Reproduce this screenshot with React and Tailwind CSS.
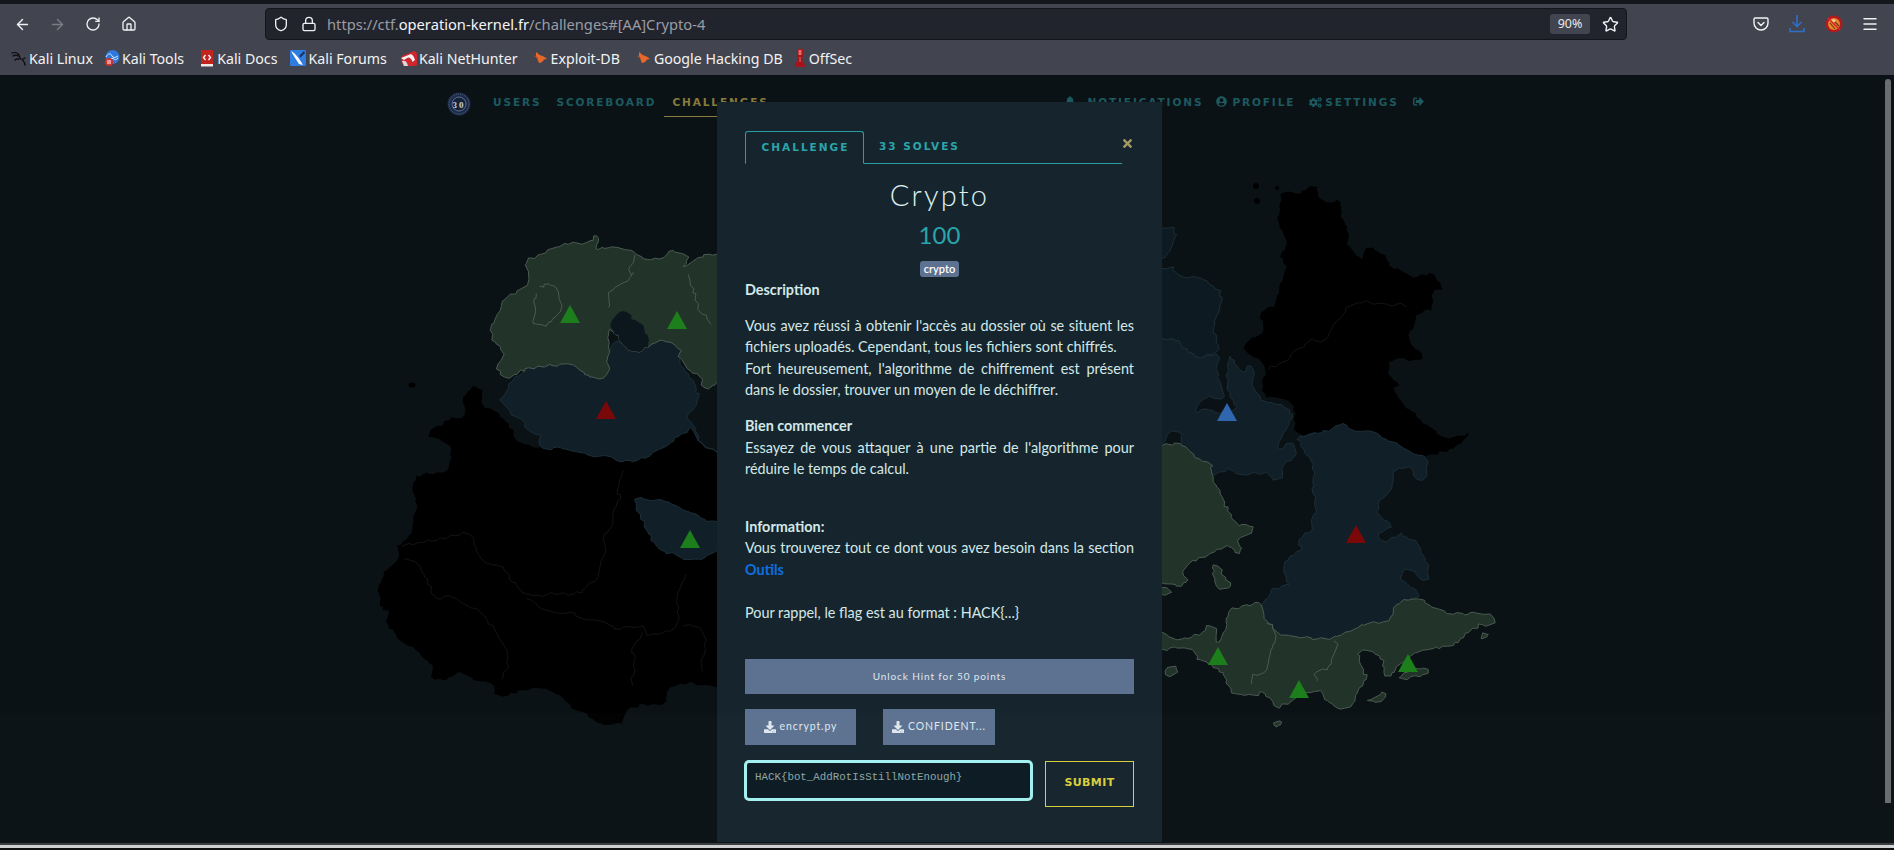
import React from "react";
import { ArrowLeft, ArrowRight, RotateCw, Home, Shield, Lock, Star, Menu } from "lucide-react";
import { FaBell, FaUserCircle, FaCogs, FaSignOutAlt, FaTimes, FaDownload } from "react-icons/fa";

// organic outline: corner cutting plus a position-based wobble, so shared borders stay shared
function organic(pts, closed = true) {
  const q = [];
  const m = pts.length;
  for (let i = 0; i < (closed ? m : m - 1); i++) {
    const [x0, y0] = pts[i];
    const [x1, y1] = pts[(i + 1) % m];
    q.push([x0 * 0.8 + x1 * 0.2, y0 * 0.8 + y1 * 0.2]);
    q.push([x0 * 0.2 + x1 * 0.8, y0 * 0.2 + y1 * 0.8]);
  }
  const out = [];
  const n = q.length;
  for (let i = 0; i < (closed ? n : n - 1); i++) {
    const [x0, y0] = q[i];
    const [x1, y1] = q[(i + 1) % n];
    const len = Math.hypot(x1 - x0, y1 - y0);
    const steps = Math.max(1, Math.round(len / 4));
    for (let s = 0; s < steps; s++) {
      const x = x0 + ((x1 - x0) * s) / steps;
      const y = y0 + ((y1 - y0) * s) / steps;
      const dx = Math.sin(x * 0.83 + y * 0.47) * 1.2 + Math.sin(x * 0.21 - y * 0.17) * 1.3;
      const dy = Math.cos(x * 0.41 - y * 0.79) * 1.2 + Math.cos(x * 0.13 + y * 0.23) * 1.3;
      out.push(`${(x + dx).toFixed(1)},${(y + dy).toFixed(1)}`);
    }
  }
  return out.join(" ");
}
const toA = (s) => s.map(([x, y]) => [380 + x / 3, 125 + y / 2.412]);
const toB = (s) => s.map(([x, y]) => [1150 + x / 3, 95 + y / 2.613]);
const a = (s) => organic(toA(s));
const b = (s) => organic(toB(s));
const al = (s) => organic(toA(s), false);
const bl = (s) => organic(toB(s), false);

const GREEN = "#22332a";
const GSTROKE = "#4a5b51";
const BLUE = "#111f28";
const BSTROKE = "#1d2e36";

const blackW = [[280,440],[310,470],[300,490],[370,520],[410,580],[480,600],[530,595],[600,610],[700,625],[780,630],[850,600],[900,570],[930,545],[960,590],[1040,620],[1040,780],[970,770],[880,730],[770,715],[770,750],[830,850],[970,870],[1040,825],[1040,1180],[950,1165],[870,1175],[855,1220],[760,1220],[740,1240],[720,1270],[640,1260],[560,1210],[500,1175],[400,1190],[350,1195],[340,1170],[240,1140],[200,1160],[150,1155],[160,1125],[100,1085],[30,1040],[15,1010],[25,990],[0,995],[0,905],[60,860],[50,840],[75,825],[110,760],[100,690],[110,665],[190,660],[215,630],[215,590],[150,570],[160,550],[210,525],[250,520],[255,480]];
const greenNW = [[435,150],[520,115],[570,100],[620,105],[650,85],[660,100],[640,120],[700,110],[760,125],[830,150],[870,125],[920,130],[925,150],[915,160],[950,135],[1040,130],[1040,430],[970,455],[960,430],[890,380],[900,355],[860,340],[810,350],[770,375],[720,340],[690,300],[680,340],[690,350],[680,430],[640,435],[600,410],[530,392],[430,410],[380,435],[350,400],[370,370],[325,325],[350,290],[345,270],[390,230],[440,210],[445,185]];
const pit = [[690,295],[720,270],[750,270],[770,295],[800,310],[810,350],[770,375],[720,340]];
const blueC = [[360,470],[430,410],[530,392],[600,410],[640,435],[680,430],[690,350],[720,340],[770,375],[810,350],[860,340],[900,355],[890,380],[960,460],[950,500],[920,520],[945,540],[960,590],[1040,620],[1040,440],[1040,620],[960,590],[930,545],[900,570],[850,600],[780,630],[700,625],[600,610],[530,595],[480,600],[475,565],[440,550],[420,530],[380,500],[365,490]];
const blueSm = [[770,715],[880,730],[970,770],[1040,780],[1040,825],[970,870],[830,850],[770,750]];
const greenE = [[0,730],[90,710],[130,745],[185,765],[190,800],[215,860],[250,925],[310,930],[315,945],[265,965],[280,990],[260,1000],[240,980],[170,1010],[120,1030],[90,1050],[115,1070],[90,1085],[0,1075]];
const ne1 = [[0,270],[65,250],[80,275],[150,280],[225,325],[190,400],[205,470],[170,490],[100,475],[80,440],[0,440]];
const ne2 = [[0,170],[65,145],[80,170],[75,200],[0,260]];
const blueN = [[0,440],[80,440],[100,475],[170,490],[205,480],[205,560],[225,595],[190,590],[150,600],[135,630],[170,620],[200,640],[260,625],[240,600],[230,500],[240,480],[265,520],[290,530],[300,510],[318,525],[300,560],[340,610],[410,615],[435,655],[390,690],[390,740],[420,700],[440,750],[395,770],[395,810],[370,810],[365,790],[280,800],[240,775],[190,800],[185,765],[130,745],[90,710],[100,685],[50,685],[40,720],[0,730]];
const blackNE = [[390,60],[410,55],[445,60],[500,35],[510,80],[570,80],[570,115],[600,160],[590,200],[640,235],[655,200],[700,220],[720,260],[750,250],[780,285],[850,265],[875,310],[850,320],[850,360],[800,370],[800,410],[770,425],[790,460],[825,490],[790,500],[720,495],[710,540],[750,560],[725,575],[790,640],[880,700],[920,700],[960,690],[930,720],[830,755],[750,720],[640,680],[560,665],[545,685],[440,690],[430,620],[410,600],[340,590],[340,530],[345,510],[275,470],[300,445],[340,430],[335,370],[385,345],[390,290],[415,260],[390,220],[410,180],[385,130]];
const blueSE = [[445,695],[545,685],[560,665],[640,680],[750,720],[830,755],[830,805],[810,815],[780,780],[735,780],[725,830],[680,870],[680,905],[725,925],[685,960],[700,975],[760,945],[820,990],[835,1060],[820,1075],[790,1045],[750,1045],[750,1075],[800,1100],[800,1120],[730,1135],[725,1180],[640,1190],[560,1220],[450,1225],[380,1210],[345,1170],[340,1135],[365,1095],[415,1085],[400,1060],[420,1010],[460,990],[445,960],[495,935],[490,770],[450,720]];
const greenS = [[0,1205],[90,1225],[150,1215],[175,1185],[205,1210],[195,1235],[225,1215],[230,1150],[285,1135],[340,1135],[345,1170],[380,1210],[450,1225],[560,1220],[640,1190],[725,1180],[730,1135],[800,1120],[880,1160],[960,1155],[1030,1165],[1030,1185],[980,1190],[910,1240],[830,1255],[770,1275],[725,1320],[700,1325],[695,1270],[640,1255],[625,1270],[650,1335],[600,1405],[530,1400],[515,1360],[470,1365],[430,1385],[385,1410],[345,1360],[300,1380],[235,1355],[220,1300],[150,1290],[125,1250],[0,1250]];
const islands = [
  [[745,1325],[790,1295],[835,1305],[830,1320],[760,1330]],
  [[185,1030],[205,1030],[215,1065],[240,1080],[235,1095],[205,1090],[190,1065]],
  [[990,1210],[1015,1207],[1015,1222],[990,1222]],
  [[52,1295],[75,1295],[80,1315],[60,1322],[50,1310]],
  [[368,1437],[388,1437],[390,1452],[375,1457]],
  [[658,1385],[695,1365],[708,1375],[695,1390],[662,1393]],
  [[0,1090],[55,1092],[60,1105],[0,1112]],
];
const linesGreenA = [[[465,210],[520,197],[548,240],[530,285],[490,310],[450,295],[470,250],[465,210]], [[760,125],[750,180],[770,180],[715,210],[680,230],[690,280]], [[920,165],[950,260],[1010,315]]];
const linesGreenB = [[[345,1170],[380,1210],[360,1270],[345,1310],[305,1320],[305,1360]], [[545,1220],[560,1250],[545,1295],[495,1310],[515,1360]], [[195,1235],[225,1215]]];
const linesDarkA = [[[50,840],[170,815],[270,805],[300,870],[370,890],[430,955],[600,950],[660,900],[680,800],[720,725],[710,700],[740,630]], [[430,955],[490,990],[620,1005],[690,1030],[790,1030],[800,1050],[900,1030],[885,960],[930,880]], [[60,860],[130,885],[160,960],[230,960],[320,1005],[375,1080],[385,1135],[350,1180]], [[790,1040],[760,1070],[760,1160],[750,1190]], [[900,1030],[970,1030],[975,1100],[950,1165]]];
const linesDarkB = [[[345,520],[400,500],[480,440],[520,450],[580,370],[630,345],[740,350],[800,370]]];

const tris = [
  [570, 239, "#1c7f1c"], [677, 245, "#1c7f1c"], [606, 335, "#7a0808"], [690, 464, "#1c7f1c"],
  [1227, 337, "#2f66ad"], [1356, 459, "#7a0808"], [1218, 581, "#1c7f1c"], [1299, 614, "#1c7f1c"], [1408, 588, "#1c7f1c"],
];

function MapArt() {
  return (
    <svg className="absolute inset-0" width="1894" height="768" viewBox="0 0 1894 768">
      <polygon points={a(blackW)} fill="#000" />
      <ellipse cx="412" cy="310" rx="3.500" ry="2.500" fill="#000" />
      {linesDarkA.map((l, i) => <polyline key={i} points={al(l)} fill="none" stroke="#111517" strokeWidth="1" />)}
      <polygon points={a(blueC)} fill={BLUE} stroke={BSTROKE} strokeWidth="1" strokeLinejoin="round" />
      <polygon points={a(blueSm)} fill={BLUE} stroke={BSTROKE} strokeWidth="1" />
      <polygon points={a(greenNW)} fill={GREEN} stroke={GSTROKE} strokeWidth="1" strokeLinejoin="round" />
      <polygon points={a(pit)} fill="#0c161d" />
      {linesGreenA.map((l, i) => <polyline key={i} points={al(l)} fill="none" stroke={GSTROKE} strokeWidth="1" />)}

      <polygon points={b(ne2)} fill="#0e1a21" stroke={BSTROKE} strokeWidth="1" />
      <polygon points={b(ne1)} fill="#0e1a21" stroke={BSTROKE} strokeWidth="1" />
      <polygon points={b(blackNE)} fill="#000" />
      <circle cx="1256" cy="111" r="3" fill="#000" />
      <circle cx="1257" cy="126" r="3" fill="#000" />
      <circle cx="1277" cy="113" r="2" fill="#000" />
      {linesDarkB.map((l, i) => <polyline key={i} points={bl(l)} fill="none" stroke="#111517" strokeWidth="1" />)}
      <polygon points={b(blueN)} fill={BLUE} stroke={BSTROKE} strokeWidth="1" strokeLinejoin="round" />
      <polygon points={b(blueSE)} fill={BLUE} stroke={BSTROKE} strokeWidth="1" strokeLinejoin="round" />
      <polygon points={b(greenE)} fill={GREEN} stroke={GSTROKE} strokeWidth="1" strokeLinejoin="round" />
      <polygon points={b(greenS)} fill={GREEN} stroke={GSTROKE} strokeWidth="1" strokeLinejoin="round" />
      {islands.map((l, i) => <polygon key={i} points={b(l)} fill={GREEN} stroke={GSTROKE} strokeWidth="1" strokeLinejoin="round" />)}
      {linesGreenB.map((l, i) => <polyline key={i} points={bl(l)} fill="none" stroke={GSTROKE} strokeWidth="1" />)}

      {tris.map(([x, y, c], i) => <polygon key={i} points={`${x},${y - 9} ${x + 10},${y + 9} ${x - 10},${y + 9}`} fill={c} />)}
    </svg>
  );
}

function KaliIcon() {
  return (
    <svg width="16" height="16" viewBox="0 0 16 16" fill="none" stroke="#0a0a0c" strokeWidth="1.300" strokeLinecap="round">
      <path d="M1 3c3-1 6 0 7 2 1 2 0 3 2 4 1.500.7 3 1.500 3.500 4l.5 2" />
      <path d="M2 6c2-1 4-1 5 0M8 9c-2-.5-3 0-4 1" />
      <path d="M12 9l2-1" />
    </svg>
  );
}
function ToolsIcon() {
  return (
    <svg width="16" height="16" viewBox="0 0 16 16">
      <circle cx="8.500" cy="7" r="7" fill="#2e78dc" />
      <path d="M2 7c2-4 5-4 6-1 1 2 3 2 6 0M6 10c1-2 3-2 4-1s2 1 4-1" stroke="#d7e8ff" strokeWidth="1" fill="none" />
      <circle cx="5" cy="12" r="4" fill="#d2302a" />
      <rect x="3.500" y="10" width="1" height="4" fill="#fff" />
      <rect x="5.500" y="10" width="1" height="4" fill="#fff" />
    </svg>
  );
}
function DocsIcon() {
  return (
    <svg width="16" height="17" viewBox="-1 0 16 17">
      <rect x="1" y="0" width="12" height="15" rx="1" fill="#c3231f" />
      <rect x="1" y="14" width="12" height="2.500" fill="#eee8e2" />
      <path d="M5.500 5 3.500 7.500 5.500 10M8.500 5l2 2.500-2 2.500" stroke="#fff" strokeWidth="1.300" fill="none" />
    </svg>
  );
}
function ForumsIcon() {
  return (
    <svg width="16" height="16" viewBox="0 0 16 16">
      <rect width="16" height="16" rx="1" fill="#2f7de1" />
      <path d="M1 1c4 2 8 7 12 14l-4-1C6 9 3 5 1 1z" fill="#fff" />
      <path d="M14 1 9 6l1.500 1.500L15 3z" fill="#16335e" />
    </svg>
  );
}
function HunterIcon() {
  return (
    <svg width="16" height="15" viewBox="0 0 16 15">
      <path d="M1 5 13 0c2 1 3 2 3 3v11l-3 1H3L0 10z" fill="#d1262c" />
      <path d="M0 7 10 3c2 1 3 3 4 6l-2.500 2C11 8 9 6.500 7 6.500L3 9z" fill="#f4f4f4" />
      <path d="M1 10c3-1 5 0 6 5H3z" fill="#d8d8d8" />
    </svg>
  );
}
function ExploitIcon() {
  return (
    <svg width="16" height="12" viewBox="0 0 16 12">
      <path d="M3 0c2 1 3 3 5 3.500 2 .5 4 1.500 6 3.500l-3 .5c-1 2-3 3.500-5 3.500C5 9 4 6 3 4z" fill="#e8672a" />
      <path d="M1 4c2 0 3 2 4 3" stroke="#b34f22" strokeWidth="1" fill="none" />
    </svg>
  );
}
function OffSecIcon() {
  return (
    <svg width="14" height="19" viewBox="0 0 14 19">
      <path d="M4 0h6v4l-.8 8c1.500 1 2.800 3 2.800 6H2c0-3 1.300-5 2.800-6L4 4z" fill="#a8131a" />
      <rect x="5.500" y="1" width="3" height="5" fill="#e56a6a" />
      <rect x="6.300" y="8" width="1.500" height="5" fill="#d8494f" />
    </svg>
  );
}
function PocketIcon() {
  return (
    <svg width="16" height="16" viewBox="0 0 16 16" fill="none" stroke="#f2f2f4" strokeWidth="1.400" strokeLinejoin="round" strokeLinecap="round">
      <path d="M2.200 2h11.600c.7 0 1.200.5 1.200 1.200V7c0 4-3.100 7-7 7S1 11 1 7V3.200C1 2.500 1.500 2 2.200 2z" />
      <path d="M5 6.500 8 9.500l3-3" />
    </svg>
  );
}
function DownloadArrow() {
  return (
    <svg width="16" height="18" viewBox="0 0 16 18" fill="none" stroke="#2f6fc9" strokeWidth="1.600">
      <path d="M8 0v11M3.500 7 8 11.500 12.500 7M1 13v3.500h14V13" />
    </svg>
  );
}
function FoxIcon() {
  return (
    <svg width="18" height="18" viewBox="0 0 18 18">
      <circle cx="9" cy="9" r="8.500" fill="#b3181f" />
      <circle cx="9" cy="9" r="6" fill="#e8862c" />
      <path d="M5 8l5 6M8 5l6 6" stroke="#6e3410" strokeWidth="1.100" />
      <path d="M6 5l3-1 2 2-3 2z" fill="#f7c98a" />
      <path d="M3 3l12 12" stroke="#d8262c" strokeWidth="1.600" />
    </svg>
  );
}
function Logo() {
  return (
    <svg width="24" height="24" viewBox="0 0 24 24">
      <circle cx="12" cy="12" r="11.500" fill="#1b2a49" />
      <circle cx="12" cy="12" r="10" fill="none" stroke="#5c6f8a" strokeWidth="1" strokeDasharray="1 1" />
      <circle cx="12" cy="12" r="7" fill="#16213a" stroke="#7f8ca3" strokeWidth="0.7" />
      <text x="12" y="15.500" textAnchor="middle" fontSize="9" fontWeight="700" fontFamily="'Liberation Serif', serif" fill="#c9d1dd">30</text>
    </svg>
  );
}

const bookmarks = [
  ["Kali Linux", <KaliIcon />, "ml-[11px]"],
  ["Kali Tools", <ToolsIcon />, "ml-[11px]"],
  ["Kali Docs", <DocsIcon />, "ml-[15px]"],
  ["Kali Forums", <ForumsIcon />, "ml-[13px]"],
  ["Kali NetHunter", <HunterIcon />, "ml-[14px]"],
  ["Exploit-DB", <ExploitIcon />, "ml-[15px]"],
  ["Google Hacking DB", <ExploitIcon />, "ml-[16px]"],
  ["OffSec", <OffSecIcon />, "ml-[10px]"],
];

const navFont = "font-['DejaVu_Sans',sans-serif] font-bold text-[10.5px] uppercase";

function Nav() {
  return (
    <nav className={`flex h-[54px] items-start pt-[20px] tracking-[1.900px] text-[#1c5a60] ${navFont}`}>
      <div className="ml-[447px] -mt-[3px] w-[24px]"><Logo /></div>
      <a className="ml-[22px]">Users</a>
      <a className="ml-[15px]">Scoreboard</a>
      <a className="relative ml-[16px] h-[22px] w-[110px] whitespace-nowrap text-[#877c3a]">
        Challenges
        <span className="absolute left-[-8px] top-[21px] h-[1px] w-[118px] bg-[#877c3a]" />
      </a>
      <FaBell className="ml-[283px] mt-[1px] text-[10px]" />
      <a className="ml-[12px]">Notifications</a>
      <FaUserCircle className="ml-[13px] mt-[1px] text-[11px]" />
      <a className="ml-[5px]">Profile</a>
      <FaCogs className="ml-[14px] mt-[1px] text-[13px]" />
      <a className="ml-[3px]">Settings</a>
      <FaSignOutAlt className="ml-[14px] mt-[1px] text-[11px]" />
    </nav>
  );
}

function Modal() {
  const body = "font-['Lato',sans-serif] text-[14.4px] leading-[21.6px] text-[#d3e8e8]";
  return (
    <div className="absolute left-[717px] top-[27px] h-[740px] w-[445px] overflow-hidden bg-[#16252d] px-[28px] pt-[29px]">
      <button className="absolute right-[28px] top-[35px] text-[13px] text-[#a39a63]"><FaTimes /></button>
      <div className={`flex h-[33px] w-[377px] border-b border-[#2a9ea4] tracking-[2px] text-[#2aa5ab] ${navFont}`}>
        <div className="-mb-px flex w-[119px] items-center justify-center rounded-t-[3px] border border-[#2a9ea4] border-b-[#16252d] pl-[2px]">Challenge</div>
        <div className="flex items-center pl-[15px]">33 Solves</div>
      </div>
      <h1 className="mt-[14px] text-center font-['Lato',sans-serif] text-[29px] font-light leading-[34px] tracking-[2.200px] text-[#dcf0f0]">Crypto</h1>
      <div className="mt-[7px] text-center font-['Lato',sans-serif] text-[24px] leading-[32px] text-[#2aa5ab]">100</div>
      <div className="mt-[10px] flex justify-center">
        <span className="rounded-[3px] bg-[#5d7291] px-[4px] font-['Lato',sans-serif] text-[11px] font-semibold leading-[16px] text-white">crypto</span>
      </div>
      <div className={`mt-[2px] ${body}`}>
        <div className="font-bold">Description</div>
        <div className="mt-[14px] text-justify">Vous avez réussi à obtenir l'accès au dossier où se situent les fichiers uploadés. Cependant, tous les fichiers sont chiffrés.</div>
        <div className="text-justify">Fort heureusement, l'algorithme de chiffrement est présent dans le dossier, trouver un moyen de le déchiffrer.</div>
        <div className="mt-[14px] font-bold">Bien commencer</div>
        <div className="text-justify">Essayez de vous attaquer à une partie de l'algorithme pour réduire le temps de calcul.</div>
        <div className="mt-[36px] font-bold">Information:</div>
        <div className="text-justify">Vous trouverez tout ce dont vous avez besoin dans la section <a className="font-bold text-[#0d6fe0]">Outils</a></div>
        <div className="mt-[21px]">Pour rappel, le flag est au format : HACK{"{...}"}</div>
      </div>
      <button className="mt-[36px] h-[35px] w-full bg-[#5d7291] pb-[1px] font-['Lato',sans-serif] text-[10px] tracking-[0.900px] text-[#dfe7ee]">Unlock Hint for 50 points</button>
      <div className="mt-[15px] flex gap-[27px]">
        <button className="flex h-[36px] w-[111px] items-center justify-center gap-[4px] bg-[#5d7291] font-['Lato',sans-serif] text-[10.5px] tracking-[0.900px] text-[#dfe7ee]"><FaDownload className="text-[12px]" />encrypt.py</button>
        <button className="flex h-[36px] w-[112px] items-center justify-center gap-[4px] bg-[#5d7291] font-['Lato',sans-serif] text-[10.5px] tracking-[0.900px] text-[#dfe7ee]"><FaDownload className="text-[12px]" />CONFIDENT...</button>
      </div>
      <div className="mt-[15px] flex items-start">
        <div className="-ml-[1px] h-[41px] w-[289px] rounded-[5px] border-[3px] border-[#a3f0f0] bg-[#0c1b23] pl-[8px] pt-[8px] font-['Liberation_Mono',monospace] text-[10.800px] leading-[13px] text-[#8fa5a5]">HACK{"{bot_AddRotIsStillNotEnough}"}</div>
        <button className="ml-[12px] mt-[1px] h-[46px] w-[89px] border border-[#d8cf3a] pb-[1px] font-['DejaVu_Sans',sans-serif] text-[11px] font-bold tracking-[0.400px] text-[#d8cf3a]">SUBMIT</button>
      </div>
    </div>
  );
}

export default function App() {
  const iconCls = "text-[#f0f0f4]";
  return (
    <div className="flex h-[850px] w-[1894px] flex-col overflow-hidden bg-[#0b1216] font-['Noto_Sans',sans-serif]">
      <div className="h-[4px] bg-[#15161c]" />
      <header className="flex h-[37px] items-center bg-[#42454f] pt-[3px]">
        <ArrowLeft size={17} className={`ml-[14px] ${iconCls}`} />
        <ArrowRight size={17} className="ml-[18px] text-[#7b7d85]" />
        <RotateCw size={16} className={`ml-[19px] ${iconCls}`} />
        <Home size={16} className={`ml-[20px] ${iconCls}`} />
        <div className="ml-[128px] flex h-[32px] w-[1362px] items-center rounded-[4px] border border-[#14151a] bg-[#22242d] text-[14.700px]">
          <Shield size={16} className={`ml-[7px] ${iconCls}`} />
          <Lock size={16} className={`ml-[12px] ${iconCls}`} />
          <span className="ml-[10px] text-[#9a9ca4]">https://ctf.<span className="text-[#f5f5f7]">operation-kernel.fr</span>/challenges#[AA]Crypto-4</span>
          <span className="ml-auto flex h-[20px] w-[40px] items-center justify-center rounded-[3px] bg-[#42454f] text-[12.500px] text-[#e8e8ea]">90%</span>
          <Star size={17} className={`ml-[12px] mr-[7px] ${iconCls}`} />
        </div>
        <div className="ml-[126px]"><PocketIcon /></div>
        <div className="ml-[20px]"><DownloadArrow /></div>
        <div className="ml-[20px]"><FoxIcon /></div>
        <Menu size={18} className={`ml-[18px] ${iconCls}`} />
      </header>
      <div className="flex h-[34px] items-center bg-[#42454f] pt-[1px] text-[14.200px] text-[#f2f2f4]">
        {bookmarks.map(([t, icon, m]) => (
          <div key={t} className={`flex items-center gap-[2px] ${m}`}>
            {icon}<span className="whitespace-nowrap">{t}</span>
          </div>
        ))}
      </div>
      <main className="relative flex-1 bg-[#0b1216]">
        <MapArt />
        <div className="relative"><Nav /></div>
        <Modal />
        <div className="pointer-events-none absolute inset-x-0 bottom-0 h-[130px] bg-white/[0.008]" />
        <div className="absolute right-[3px] top-[4px] h-[724px] w-[6px] rounded-t-[3px] bg-[#6a6d72]" />
      </main>
      <div className="h-[7px] shrink-0 bg-[#0f1012]">
        <div className="h-[2px] bg-[#3c3e42]" />
        <div className="h-[3px] bg-[#cfd0d2]" />
      </div>
    </div>
  );
}
